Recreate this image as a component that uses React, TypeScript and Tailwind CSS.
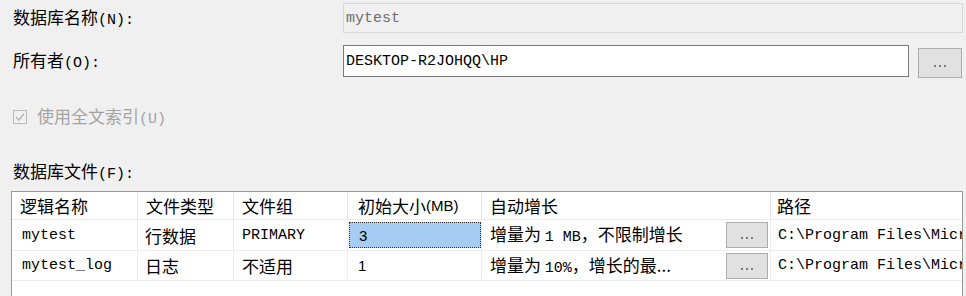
import React from "react";

const cjk = "font-['Noto_Sans_CJK_SC',sans-serif] text-[17px] leading-none";
const mono = "font-['Liberation_Mono',monospace] text-[15px] leading-none";
const sans = "font-['Liberation_Sans',sans-serif] text-[15px] leading-none";

const cols = ["w-[126px]", "w-[96px]", "w-[114px]", "w-[134px]", "w-[289px]", "w-[200px]"];

function Dots() {
  return (
    <span className="flex gap-[3px] items-center pt-[6px]">
      <span className="w-[2px] h-[2px] bg-[#7a7a7a]" />
      <span className="w-[2px] h-[2px] bg-[#7a7a7a]" />
      <span className="w-[2px] h-[2px] bg-[#7a7a7a]" />
    </span>
  );
}

function Label({ zh, key2 }: { zh: string; key2: string }) {
  return (
    <div className="flex items-baseline">
      <span className={cjk}>{zh}</span>
      <span className={mono + " text-[14px]"}>{key2}</span>
    </div>
  );
}

type Row = {
  name: string;
  type: string;
  group: string;
  groupMono: boolean;
  size: string;
  growth: React.ReactNode;
  path: string;
  selected?: boolean;
  h: string;
};

const rows: Row[] = [
  {
    name: "mytest",
    type: "行数据",
    group: "PRIMARY",
    groupMono: true,
    size: "3",
    growth: (
      <>
        <span className={cjk}>增量为 </span>
        <span className={mono}>1 MB</span>
        <span className={cjk}>，不限制增长</span>
      </>
    ),
    path: "C:\\Program Files\\Microsoft SQL Server",
    selected: true,
    h: "h-[31px]",
  },
  {
    name: "mytest_log",
    type: "日志",
    group: "不适用",
    groupMono: false,
    size: "1",
    growth: (
      <>
        <span className={cjk}>增量为 </span>
        <span className={mono}>10%</span>
        <span className={cjk}>，增长的最...</span>
      </>
    ),
    path: "C:\\Program Files\\Microsoft SQL Server",
    h: "h-[30px]",
  },
];

export default function App() {
  return (
    <div className="w-[966px] h-[296px] bg-[#f0f0f0] overflow-hidden text-black pl-[11px] pt-[3px] flex flex-col">
      <div className="flex items-center h-[30px]">
        <div className="w-[332px] pl-[2px]">
          <Label zh="数据库名称" key2="(N):" />
        </div>
        <div className="w-[620px] h-[30px] border border-[#d7d7d7] flex items-center pl-[2px]">
          <span className={mono + " text-[#6d6d6d] text-[14px]"}>mytest</span>
        </div>
      </div>

      <div className="flex items-center h-[32px] mt-[12px]">
        <div className="w-[332px] pl-[2px]">
          <Label zh="所有者" key2="(O):" />
        </div>
        <div className="w-[566px] h-[32px] border border-[#7a7a7a] bg-white flex items-center pl-[2px]">
          <span className={mono}>DESKTOP-R2JOHQQ\HP</span>
        </div>
        <button className="ml-[9px] mt-[3px] w-[44px] h-[30px] bg-[#e1e1e1] border border-[#adadad] flex items-center justify-center">
          <Dots />
        </button>
      </div>

      <div className="flex items-center h-[20px] mt-[30px] pl-[2px] text-[#a3a3a3]">
        <span className="w-[14px] h-[14px] border border-[#bcbcbc] flex items-center justify-center">
          <svg width="12" height="12" viewBox="0 0 12 12">
            <path d="M2 6.2 L4.8 9 L10 2.8" fill="none" stroke="#b4b4b4" strokeWidth="1.4" />
          </svg>
        </span>
        <span className="ml-[10px] flex items-baseline">
          <span className={cjk}>使用全文索引</span>
          <span className={mono + " text-[14px]"}>(U)</span>
        </span>
      </div>

      <div className="mt-[35px] pl-[2px] h-[20px] flex items-center">
        <Label zh="数据库文件" key2="(F):" />
      </div>

      <div className="mt-[9px] w-[952px] flex-1 bg-white border-l border-t border-r border-[#9a9a9a] overflow-hidden">
        <div className="flex h-[28px] border-b border-[#ededed]">
          {["逻辑名称", "文件类型", "文件组"].map((t, i) => (
            <div key={t} className={cols[i] + " shrink-0 border-r border-[#e4e4e4] flex items-center pl-[8px]"}>
              <span className={cjk}>{t}</span>
            </div>
          ))}
          <div className={cols[3] + " shrink-0 border-r border-[#e4e4e4] flex items-center pl-[10px]"}>
            <span className={cjk}>初始大小</span>
            <span className={sans}>(MB)</span>
          </div>
          <div className={cols[4] + " shrink-0 border-r border-[#e4e4e4] flex items-center pl-[8px]"}>
            <span className={cjk}>自动增长</span>
          </div>
          <div className={cols[5] + " shrink-0 flex items-center pl-[6px]"}>
            <span className={cjk}>路径</span>
          </div>
        </div>

        {rows.map((r) => (
          <div key={r.name} className={"flex border-b border-[#ededed] " + r.h}>
            <div className={cols[0] + " shrink-0 border-r border-[#ededed] flex items-center pl-[10px]"}>
              <span className={mono + " text-[14px]"}>{r.name}</span>
            </div>
            <div className={cols[1] + " shrink-0 border-r border-[#ededed] flex items-center pl-[7px]"}>
              <span className={cjk}>{r.type}</span>
            </div>
            <div className={cols[2] + " shrink-0 border-r border-[#ededed] flex items-center pl-[8px]"}>
              <span className={r.groupMono ? mono + " text-[13px]" : cjk}>{r.group}</span>
            </div>
            <div className={cols[3] + " shrink-0 border-r border-[#ededed] flex items-stretch py-[2px] pl-[1px]"}>
              <div
                className={
                  "flex-1 flex items-center pl-[9px] " +
                  (r.selected ? "bg-[#a6cdf1] border border-dotted border-[#333]" : "")
                }
              >
                <span className={sans}>{r.size}</span>
              </div>
            </div>
            <div className={cols[4] + " shrink-0 border-r border-[#ededed] flex items-center pl-[8px] pr-[2px]"}>
              <div className="flex-1 flex items-baseline whitespace-pre">{r.growth}</div>
              <button className="w-[42px] h-[26px] bg-[#e1e1e1] border border-[#adadad] flex items-center justify-center">
                <Dots />
              </button>
            </div>
            <div className={cols[5] + " shrink-0 flex items-center pl-[7px] overflow-hidden whitespace-pre"}>
              <span className={mono}>{r.path}</span>
            </div>
          </div>
        ))}
      </div>
    </div>
  );
}
